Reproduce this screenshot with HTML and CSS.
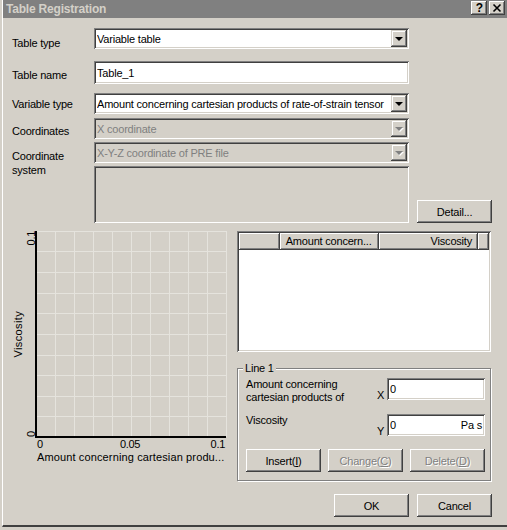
FILE: index.html
```html
<!DOCTYPE html>
<html>
<head>
<meta charset="utf-8">
<title>Table Registration</title>
<link rel="stylesheet" href="styles.css">
</head>
<body>
<div class="window">
  <div class="titlebar">
    <span class="title">Table Registration</span>
    <div class="caption-btns">
      <span class="cbtn help">?</span>
      <span class="cbtn close"><svg width="16" height="14" viewBox="0 0 16 14"><path d="M4.5 3.5 L11.5 10.5 M11.5 3.5 L4.5 10.5" stroke="#000" stroke-width="1.6" fill="none"/></svg></span>
    </div>
  </div>

  <div class="form">
    <div class="row r-type">
      <span class="lbl pad9">Table type</span>
      <div class="field combo"><span class="val">Variable table</span><span class="arrow"><i class="tri"></i></span></div>
    </div>
    <div class="row r-name">
      <span class="lbl pad8">Table name</span>
      <div class="field edit tall"><span class="val">Table_1</span></div>
    </div>
    <div class="row r-var">
      <span class="lbl pad5">Variable type</span>
      <div class="field combo"><span class="val">Amount concerning cartesian products of rate-of-strain tensor</span><span class="arrow"><i class="tri"></i></span></div>
    </div>
    <div class="row r-coord">
      <span class="lbl pad7">Coordinates</span>
      <div class="field combo disabled"><span class="val">X coordinate</span><span class="arrow"><i class="tri"></i></span></div>
    </div>
    <div class="row r-sys">
      <span class="lbl pad7 two">Coordinate<br>system</span>
      <div class="field combo disabled"><span class="val">X-Y-Z coordinate of PRE file</span><span class="arrow"><i class="tri"></i></span></div>
    </div>
    <div class="row r-area">
      <span class="lbl"></span>
      <div class="field area"></div>
      <button class="btn detail">Detail...</button>
    </div>
  </div>

  <div class="lower">
    <svg class="chart" width="234" height="240" viewBox="3 230 234 240">
      <g stroke="#e5e3dd" stroke-width="1">
        <line x1="55.5" y1="230" x2="55.5" y2="436"/>
        <line x1="74.5" y1="230" x2="74.5" y2="436"/>
        <line x1="93.5" y1="230" x2="93.5" y2="436"/>
        <line x1="112.5" y1="230" x2="112.5" y2="436"/>
        <line x1="131.5" y1="230" x2="131.5" y2="436"/>
        <line x1="150.5" y1="230" x2="150.5" y2="436"/>
        <line x1="169.5" y1="230" x2="169.5" y2="436"/>
        <line x1="188.5" y1="230" x2="188.5" y2="436"/>
        <line x1="207.5" y1="230" x2="207.5" y2="436"/>
        <line x1="226.5" y1="230" x2="226.5" y2="436"/>
        <line x1="36" y1="230.5" x2="227" y2="230.5"/>
        <line x1="36" y1="250.5" x2="227" y2="250.5"/>
        <line x1="36" y1="271.5" x2="227" y2="271.5"/>
        <line x1="36" y1="292.5" x2="227" y2="292.5"/>
        <line x1="36" y1="312.5" x2="227" y2="312.5"/>
        <line x1="36" y1="333.5" x2="227" y2="333.5"/>
        <line x1="36" y1="354.5" x2="227" y2="354.5"/>
        <line x1="36" y1="374.5" x2="227" y2="374.5"/>
        <line x1="36" y1="395.5" x2="227" y2="395.5"/>
        <line x1="36" y1="415.5" x2="227" y2="415.5"/>
      </g>
      <g stroke="#000" stroke-width="2">
        <line x1="36" y1="230" x2="36" y2="437"/>
        <line x1="35" y1="436" x2="226" y2="436"/>
      </g>
      <g class="ctext">
        <text transform="translate(35 230) rotate(-90)" text-anchor="end">0.1</text>
        <text transform="translate(35 436) rotate(-90)" text-anchor="start">0</text>
        <text transform="translate(22 333.5) rotate(-90)" text-anchor="middle" textLength="46" lengthAdjust="spacing">Viscosity</text>
        <text x="37" y="447">0</text>
        <text x="130" y="447" text-anchor="middle">0.05</text>
        <text x="225" y="447" text-anchor="end">0.1</text>
        <text x="37" y="460" textLength="187" lengthAdjust="spacing">Amount concerning cartesian produ...</text>
      </g>
    </svg>

    <div class="right">
      <div class="list">
        <div class="list-head">
          <span class="hcell c0"></span>
          <span class="hcell c1">Amount concern...</span>
          <span class="hcell c2">Viscosity</span>
          <span class="hcell c3"></span>
        </div>
      </div>

      <fieldset class="group">
        <legend>Line 1</legend>
        <div class="xy-row">
          <span class="xy-label">Amount concerning<br>cartesian products of</span>
          <span class="axis">X</span>
          <div class="field edit small"><span class="val">0</span></div>
        </div>
        <div class="xy-row yrow">
          <span class="xy-label">Viscosity</span>
          <span class="axis">Y</span>
          <div class="field edit small"><span class="val">0</span><span class="unit">Pa s</span></div>
        </div>
        <div class="grp-btns">
          <button class="btn gbtn">Insert(<u>I</u>)</button>
          <button class="btn gbtn off">Change(<u>C</u>)</button>
          <button class="btn gbtn off">Delete(<u>D</u>)</button>
        </div>
      </fieldset>
    </div>
  </div>

  <div class="footer">
    <button class="btn">OK</button>
    <button class="btn">Cancel</button>
  </div>
</div>
</body>
</html>
```

FILE: styles.css
```css
* { box-sizing: border-box; }

html, body {
  margin: 0;
  padding: 0;
  background: #d4d0c8;
}

body {
  width: 507px;
  height: 530px;
  overflow: hidden;
  font-family: "Liberation Sans", Arial, sans-serif;
  font-size: 11px;
  letter-spacing: -0.2px;
  color: #000;
}

.window {
  margin-left: 2px;
  width: 505px;
  height: 527px;
  border-left: 1px solid #fff;
  border-bottom: 2px solid #404040;
  background: #d4d0c8;
  display: flex;
  flex-direction: column;
}

/* title bar */
.titlebar {
  height: 18px;
  flex: none;
  background: #808080;
  display: flex;
  align-items: flex-start;
  justify-content: space-between;
  padding: 0 2px 0 3px;
}

.title {
  font-weight: bold;
  font-size: 12px;
  line-height: 18px;
  color: #d4d0c8;
  letter-spacing: -0.2px;
}

.caption-btns {
  display: flex;
  gap: 2px;
  padding-top: 1px;
}

.cbtn {
  width: 16px;
  height: 14px;
  background: #d4d0c8;
  box-shadow: inset -1px -1px #404040, inset 1px 1px #fff, inset -2px -2px #808080;
  display: flex;
  align-items: center;
  justify-content: center;
  font-weight: bold;
  font-size: 12px;
  line-height: 14px;
  letter-spacing: 0;
}

.cbtn.help { padding-left: 1px; }
.cbtn svg { display: block; }

/* generic controls */
.field {
  background: #fff;
  box-shadow: inset 1px 1px #808080, inset -1px -1px #fff, inset 2px 2px #404040, inset -2px -2px #d4d0c8;
  display: flex;
  align-items: center;
  padding: 2px 2px 2px 3px;
  white-space: nowrap;
  overflow: hidden;
}

.field .val { flex: 1; overflow: hidden; }

.btn {
  width: 75px;
  height: 23px;
  padding: 0;
  border: none;
  background: #d4d0c8;
  box-shadow: inset -1px -1px #404040, inset 1px 1px #fff, inset -2px -2px #808080, inset 2px 2px #d4d0c8;
  font: inherit;
  letter-spacing: inherit;
  color: #000;
}

.btn u { text-decoration: underline; }

.btn.off {
  color: #808080;
  text-shadow: 1px 1px 0 #fff;
}

/* form */
.form {
  padding: 10px 0 0 9px;
}

.row {
  display: flex;
  align-items: flex-start;
}

.lbl {
  width: 82px;
  flex: none;
  line-height: 13px;
  white-space: nowrap;
}

.pad9 { padding-top: 9px; }
.pad8 { padding-top: 8px; }
.pad7 { padding-top: 7px; }
.pad5 { padding-top: 5px; }
.pad3 { padding-top: 3px; }

.two { height: 21px; overflow: visible; line-height: 14px; }

.combo, .edit, .area { width: 315px; }
.combo { height: 21px; padding-right: 2px; }
.edit { height: 21px; }
.edit.tall { height: 23px; }

.r-name { margin-top: 11px; }
.r-var { margin-top: 9px; }
.r-coord { margin-top: 4px; }
.r-sys { margin-top: 3px; }
.r-area { margin-top: 3px; align-items: flex-end; }

.arrow {
  width: 16px;
  height: 17px;
  flex: none;
  background: #d4d0c8;
  box-shadow: inset -1px -1px #404040, inset 1px 1px #d4d0c8, inset -2px -2px #808080, inset 2px 2px #fff;
  display: flex;
  align-items: center;
  justify-content: center;
}

.tri {
  display: block;
  width: 0;
  height: 0;
  border-left: 4px solid transparent;
  border-right: 4px solid transparent;
  border-top: 4px solid #000;
  margin-top: 1px;
}

.disabled { background: #d4d0c8; color: #808080; }
.disabled .tri { border-top-color: #808080; filter: drop-shadow(1px 1px 0 #fff); }

.area {
  height: 57px;
  background: #d4d0c8;
}

.detail { margin-left: 8px; }

/* lower part */
.lower {
  display: flex;
  margin-top: 8px;
}

.chart {
  display: block;
  flex: none;
}

.ctext text {
  font-family: "Liberation Sans", Arial, sans-serif;
  font-size: 11px;
  letter-spacing: -0.3px;
  fill: #000;
}

.right {
  width: 254px;
  flex: none;
}

.list {
  width: 254px;
  height: 121px;
  padding: 2px;
  background: #fff;
  box-shadow: inset 1px 1px #808080, inset -1px -1px #fff, inset 2px 2px #404040, inset -2px -2px #d4d0c8;
}

.list-head {
  display: flex;
  height: 17px;
}

.hcell {
  height: 17px;
  background: #d4d0c8;
  box-shadow: inset -1px -1px #404040, inset 1px 1px #fff, inset -2px -2px #808080;
  line-height: 17px;
  padding: 0 5px 0 6px;
  white-space: nowrap;
  overflow: hidden;
}

.c0 { width: 41px; }
.c1 { width: 100px; }
.c2 { width: 100px; text-align: right; padding-right: 6px; }
.c3 { flex: 1; }

.group {
  margin: 10px 0 0;
  width: 254px;
  padding: 3px 5px 8px 8px;
  border: 1px solid #808080;
  box-shadow: inset 1px 1px #fff, 1px 1px #fff;
  min-width: 0;
}

.group legend {
  padding: 0 2px;
  margin-left: -3px;
  line-height: 13px;
  background: #d4d0c8;
}

.xy-row {
  display: flex;
  align-items: flex-start;
}

.yrow { margin-top: 10px; }

.xy-label {
  width: 131px;
  line-height: 13px;
  white-space: nowrap;
}

.axis {
  width: 10px;
  line-height: 13px;
  padding-top: 11px;
}

.small {
  width: 98px;
  height: 22px;
}

.unit { padding-right: 1px; }

.grp-btns {
  display: flex;
  gap: 7px;
  margin-top: 11px;
}

.gbtn { width: 76px; }

.footer {
  display: flex;
  justify-content: flex-end;
  gap: 8px;
  padding-right: 15px;
  margin-top: 13px;
}
```
